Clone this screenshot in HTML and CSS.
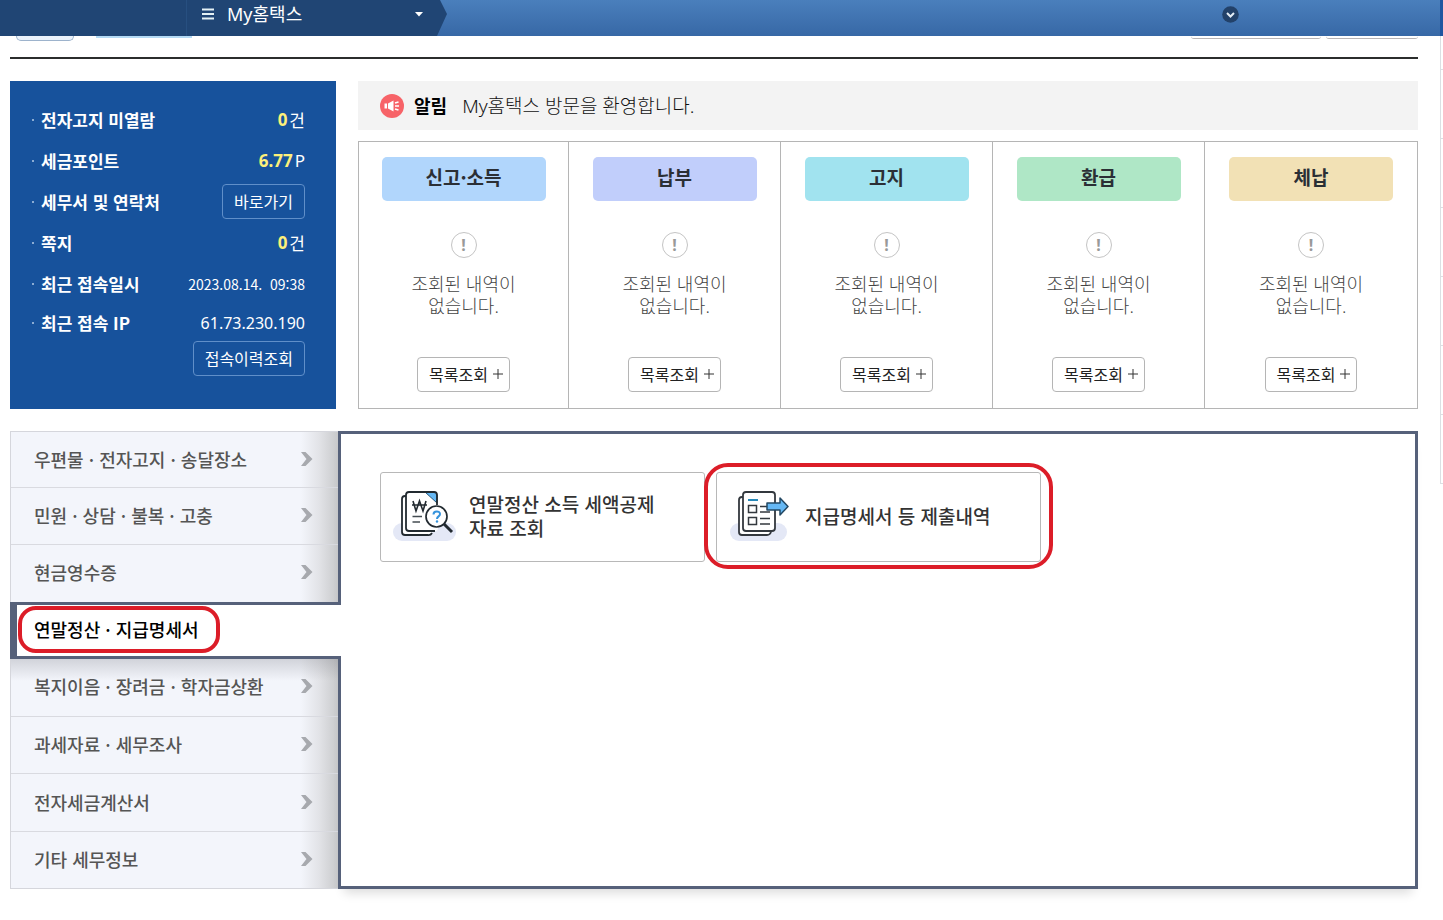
FILE: index.html
```html
<!DOCTYPE html>
<html lang="ko">
<head>
<meta charset="utf-8">
<meta name="viewport" content="width=device-width, initial-scale=1">
<title>My홈택스</title>
<link rel="stylesheet" href="styles.css">
</head>
<body>
<header class="topbar">
  <div class="topbar-menu">
    <button class="menu-button" type="button">
      <svg class="menu-lines" viewBox="0 0 12 12" aria-hidden="true"><path d="M0 1.500h12M0 6h12M0 10.500h12" stroke="#e4f1f5" stroke-width="2"/></svg>
      <span>My홈택스</span>
      <svg class="menu-caret" viewBox="0 0 8 5" aria-hidden="true"><path d="M0 0h8L4 4.600z" fill="#fff"/></svg>
    </button>
  </div>
  <button class="topbar-toggle" type="button" aria-label="펼치기">
    <svg viewBox="0 0 17 17" aria-hidden="true"><circle cx="8.500" cy="8.500" r="8.300" fill="#224169"/><path d="M5 7l3.500 3.500L12 7" fill="none" stroke="#e4edf5" stroke-width="2"/></svg>
  </button>
</header>

<div class="page">
  <div class="tab-strip" aria-hidden="true">
    <span class="strip-pill"></span><span class="strip-active"></span>
    <span class="strip-box strip-box-wide"></span><span class="strip-box"></span>
  </div>

  <main class="content">
    <section class="summary">
      <div class="account">
        <dl class="account-list">
          <div class="account-row"><dt>전자고지 미열람</dt><dd><strong>0</strong>건</dd></div>
          <div class="account-row"><dt>세금포인트</dt><dd><strong>6.77</strong>P</dd></div>
          <div class="account-row"><dt>세무서 및 연락처</dt><dd><button class="outline-button" type="button">바로가기</button></dd></div>
          <div class="account-row"><dt>쪽지</dt><dd><strong>0</strong>건</dd></div>
          <div class="account-row"><dt>최근 접속일시</dt><dd class="date">2023.08.14.&nbsp; 09:38</dd></div>
          <div class="account-row account-row-last"><dt>최근 접속 IP</dt><dd class="address">61.73.230.190</dd></div>
        </dl>
        <button class="outline-button" type="button">접속이력조회</button>
      </div>

      <div class="overview">
        <div class="notice">
          <svg class="notice-icon" viewBox="0 0 24 24" aria-hidden="true"><circle cx="12" cy="12" r="12" fill="#f76368"/><path d="M4.500 9.500H7v5H4.500zM8 9.500l5.500-3v11l-5.500-3z" fill="#fff"/><path d="M15 9l3.500-1M15 12h4M15 15l3.500 1" stroke="#fff" stroke-width="1.600"/></svg>
          <strong>알림</strong>
          <span>My홈택스 방문을 환영합니다.</span>
        </div>
        <div class="status-grid">
          <article class="status"><h2 class="tag tag-report">신고·소득</h2><span class="mark">!</span><p>조회된 내역이<br>없습니다.</p><button class="list-button" type="button">목록조회 <svg viewBox="0 0 10 10" aria-hidden="true"><path d="M5 0v10M0 5h10" stroke="#333"/></svg></button></article>
          <article class="status"><h2 class="tag tag-pay">납부</h2><span class="mark">!</span><p>조회된 내역이<br>없습니다.</p><button class="list-button" type="button">목록조회 <svg viewBox="0 0 10 10" aria-hidden="true"><path d="M5 0v10M0 5h10" stroke="#333"/></svg></button></article>
          <article class="status"><h2 class="tag tag-bill">고지</h2><span class="mark">!</span><p>조회된 내역이<br>없습니다.</p><button class="list-button" type="button">목록조회 <svg viewBox="0 0 10 10" aria-hidden="true"><path d="M5 0v10M0 5h10" stroke="#333"/></svg></button></article>
          <article class="status"><h2 class="tag tag-refund">환급</h2><span class="mark">!</span><p>조회된 내역이<br>없습니다.</p><button class="list-button" type="button">목록조회 <svg viewBox="0 0 10 10" aria-hidden="true"><path d="M5 0v10M0 5h10" stroke="#333"/></svg></button></article>
          <article class="status"><h2 class="tag tag-overdue">체납</h2><span class="mark">!</span><p>조회된 내역이<br>없습니다.</p><button class="list-button" type="button">목록조회 <svg viewBox="0 0 10 10" aria-hidden="true"><path d="M5 0v10M0 5h10" stroke="#333"/></svg></button></article>
        </div>
      </div>
    </section>

    <section class="services">
      <nav class="side">
        <a class="side-item" href="#">우편물 · 전자고지 · 송달장소<svg class="chevron" viewBox="0 0 12 14" aria-hidden="true"><path d="M0 0h4.500l7 7-7 7H0l5.500-7z"/></svg></a>
        <a class="side-item" href="#">민원 · 상담 · 불복 · 고충<svg class="chevron" viewBox="0 0 12 14" aria-hidden="true"><path d="M0 0h4.500l7 7-7 7H0l5.500-7z"/></svg></a>
        <a class="side-item" href="#">현금영수증<svg class="chevron" viewBox="0 0 12 14" aria-hidden="true"><path d="M0 0h4.500l7 7-7 7H0l5.500-7z"/></svg></a>
        <a class="side-item side-item-active" href="#" aria-current="page">연말정산 · 지급명세서<span class="ring ring-side"></span></a>
        <a class="side-item side-item-below" href="#">복지이음 · 장려금 · 학자금상환<svg class="chevron" viewBox="0 0 12 14" aria-hidden="true"><path d="M0 0h4.500l7 7-7 7H0l5.500-7z"/></svg></a>
        <a class="side-item" href="#">과세자료 · 세무조사<svg class="chevron" viewBox="0 0 12 14" aria-hidden="true"><path d="M0 0h4.500l7 7-7 7H0l5.500-7z"/></svg></a>
        <a class="side-item" href="#">전자세금계산서<svg class="chevron" viewBox="0 0 12 14" aria-hidden="true"><path d="M0 0h4.500l7 7-7 7H0l5.500-7z"/></svg></a>
        <a class="side-item" href="#">기타 세무정보<svg class="chevron" viewBox="0 0 12 14" aria-hidden="true"><path d="M0 0h4.500l7 7-7 7H0l5.500-7z"/></svg></a>
      </nav>
      <div class="panel">
        <a class="card" href="#">
          <svg class="card-icon" viewBox="0 0 64 56" aria-hidden="true">
            <rect x="0" y="34" width="63" height="18" rx="9" fill="#e4e8f6"/>
            <path d="M13 7h-1a3 3 0 0 0-3 3v33a3 3 0 0 0 3 3h23a4 4 0 0 0 4-2" fill="#fff" stroke="#222a30" stroke-width="1.800"/>
            <path d="M16 3h21l8 9v27a3 3 0 0 1-3 3H16a3 3 0 0 1-3-3V6a3 3 0 0 1 3-3z" fill="#fff"/>
            <path d="M32 3h9a3 3 0 0 1 3 3v8z" fill="#66b8f4" stroke="#235577"/>
            <path d="M44 16V6a3 3 0 0 0-3-3H16a3 3 0 0 0-3 3v33a3 3 0 0 0 3 3h26" fill="none" stroke="#222a30" stroke-width="1.800"/>
            <path d="M20 12l3 10 3.500-10 3.500 10 3-10M19 16h15" fill="none" stroke="#222a30" stroke-width="1.600"/>
            <path d="M19.500 27.500H29M19.500 33H27" stroke="#444c52" stroke-width="1.500"/>
            <path d="M51 35l8 8" stroke="#222a30" stroke-width="3"/>
            <circle cx="43.500" cy="27.500" r="10.500" fill="#fff" stroke="#222a30" stroke-width="1.700"/>
            <path d="M40.500 25.500c0-4 6.500-4 6.500-.5 0 2.500-3 2.300-3 5" fill="none" stroke="#3593dc" stroke-width="2"/><circle cx="44" cy="32.500" r="1.200" fill="#3593dc"/>
          </svg>
          <span class="card-label">연말정산 소득 세액공제<br>자료 조회</span>
        </a>
        <a class="card" href="#">
          <svg class="card-icon" viewBox="0 0 64 56" aria-hidden="true">
            <rect x="1" y="34" width="57" height="18" rx="9" fill="#e4e8f6"/>
            <path d="M14 8h-1a3 3 0 0 0-3 3v32a3 3 0 0 0 3 3h25a4 4 0 0 0 4-4" fill="#fff" stroke="#33383e" stroke-width="1.800"/>
            <rect x="14" y="3" width="32" height="39" rx="3" fill="#fff" stroke="#33383e" stroke-width="1.800"/>
            <path d="M19 11h10" stroke="#2789b9" stroke-width="2"/>
            <path d="M19.500 16.500h8v7h-8zM19.500 28.500h8v7h-8z" fill="#fff" stroke="#33383e" stroke-width="1.500"/>
            <path d="M31 17.500h11M31 23h10M31 29.500h10M31 35h10" stroke="#33383e" stroke-width="1.400"/>
            <path d="M38 14h13V9l8 8.500-8 8.500v-5H38z" fill="#66b8f4" stroke="#234863" stroke-width="1.500" stroke-linejoin="round"/>
          </svg>
          <span class="card-label">지급명세서 등 제출내역</span>
          <span class="ring ring-card"></span>
        </a>
      </div>
    </section>
  </main>
</div>

<aside class="quick" aria-hidden="true"><span></span><span></span><span></span><span></span><span></span><span></span><span></span></aside>
</body>
</html>
```
FILE: styles.css
```css
* { box-sizing: border-box; }

body {
  margin: 0;
  position: relative;
  background: #fff;
  color: #333;
  font-family: "Noto Sans", "Noto Sans CJK KR", sans-serif;
  font-size: 17px;
}

button { font: inherit; cursor: pointer; }
a { color: inherit; text-decoration: none; }
h2, p, dl, dd { margin: 0; }
svg { display: block; flex: none; }

/* Top bar */
.topbar {
  display: flex;
  height: 36px;
  background: linear-gradient(#4a7fbc, #3768a6);
  border-right: 3px solid #1f56a0;
}
.topbar-menu {
  flex: none;
  width: 447px;
  padding-left: 187px;
  background: linear-gradient(90deg, #204574 186px, #274f80 186px, #274f80 187px, #204574 187px);
  clip-path: polygon(0 0, 440px 0, 100% 14px, 437px 100%, 0 100%);
}
.menu-button {
  display: flex;
  align-items: center;
  width: 100%;
  height: 28px;
  padding: 0 24px 0 15px;
  border: 0;
  background: none;
  color: #fff;
  font-size: 18px;
  line-height: 28px;
  text-align: left;
}
.menu-lines { width: 12px; height: 12px; margin-right: 13px; }
.menu-caret { width: 8px; height: 5px; margin-left: auto; }
.topbar-toggle {
  align-self: flex-start;
  margin: 6px 201px 0 auto;
  padding: 0;
  border: 0;
  background: none;
}
.topbar-toggle svg { width: 17px; height: 17px; }

/* Page frame */
.page { padding: 0 25px 30px 10px; }
.tab-strip {
  display: flex;
  align-items: flex-start;
  height: 23px;
  border-bottom: 2px solid #2b2d2c;
}
.strip-pill {
  width: 58px;
  height: 5px;
  margin-left: 6px;
  border: 1px solid #9db3cc;
  border-top: 0;
  border-radius: 0 0 20px 20px;
  background: #eaf2fb;
}
.strip-active { width: 96px; height: 2px; margin: 0 auto 0 22px; background: #b4daf5; }
.strip-box { width: 92px; height: 3px; border-bottom: 1px solid #b8b4b5; border-radius: 0 0 4px 4px; }
.strip-box-wide { width: 130px; margin-right: 5px; }

.content { display: grid; gap: 22px; padding-top: 22px; }

/* Account summary */
.summary { display: grid; grid-template-columns: 326px 1fr; gap: 22px; }
.account {
  display: flex;
  flex-direction: column;
  align-items: flex-end;
  padding: 18px 31px 33px 22px;
  background: #17529c;
  color: #fff;
}
.account-list { width: 100%; }
.account-row { display: flex; align-items: center; justify-content: space-between; height: 41px; }
.account-row-last { height: 37px; }
.account dt { display: flex; align-items: center; font-family: "Noto Sans CJK KR", sans-serif; font-weight: 700; }
.account dt::before { content: ""; width: 2px; height: 2px; margin-right: 7px; background: #8bacd3; }
.account dd { display: flex; align-items: center; gap: 2px; }
.account dd strong { color: #fdf07a; }
.account .address { font-size: 16px; }
.account .date { font-family: "Noto Sans CJK KR", sans-serif; font-size: 14px; }
.outline-button {
  height: 35px;
  padding: 0 11px;
  border: 1px solid #608fc9;
  border-radius: 4px;
  background: none;
  color: #fff;
  font-size: 16px;
  line-height: 24px;
}

/* Notice and status columns */
.overview { display: flex; flex-direction: column; gap: 11px; min-width: 0; }
.notice {
  display: flex;
  align-items: center;
  height: 49px;
  padding-left: 22px;
  background: #f3f3f3;
  color: #111;
}
.notice-icon { width: 24px; height: 24px; margin-right: 10px; }
.notice strong { margin-right: 15px; padding-bottom: 2px; color: #000; font-size: 18px; }
.notice span { padding-bottom: 2px; font-size: 19px; font-weight: 300; }
.status-grid {
  display: grid;
  grid-template-columns: 209fr 212fr 212fr 212fr 213fr;
  flex: 1;
  border: 1px solid #b5b5b5;
}
.status {
  display: flex;
  flex-direction: column;
  align-items: center;
  padding: 15px 12px 16px;
}
.status + .status { border-left: 1px solid #b5b5b5; }
.tag {
  width: 164px;
  max-width: 100%;
  height: 44px;
  border-radius: 5px;
  color: #2b2f35;
  font-family: "Noto Sans CJK KR", sans-serif;
  font-size: 19px;
  font-weight: 700;
  line-height: 40px;
  text-align: center;
}
.tag-report { background: #b1d6fc; }
.tag-pay { background: #c1cefb; }
.tag-bill { background: #a1e3ef; }
.tag-refund { background: #afe7c6; }
.tag-overdue { background: #f2e1b5; }
.mark {
  width: 26px;
  height: 26px;
  margin-top: 31px;
  border: 1px solid #c4c4c4;
  border-radius: 50%;
  color: #999;
  font-size: 16px;
  font-weight: 700;
  line-height: 24px;
  text-align: center;
}
.status p {
  margin-top: 15px;
  color: #444;
  font-size: 18px;
  font-weight: 300;
  line-height: 22px;
  text-align: center;
}
.list-button {
  display: flex;
  align-items: center;
  gap: 5px;
  height: 35px;
  margin-top: auto;
  padding: 0 6px 2px 11px;
  border: 1px solid #b5b5b5;
  border-radius: 4px;
  background: #fff;
  color: #222;
  font-size: 16px;
}
.list-button svg { width: 10px; height: 10px; }

/* Service menu */
.services { display: grid; grid-template-columns: 328px 1fr; min-height: 458px; }
.side {
  display: grid;
  grid-template-rows: 55px repeat(7, 1fr);
  border: 1px solid #d5d6dc;
  border-right: 0;
  background: linear-gradient(90deg, #f3f5fb 290px, #e2e3e7 308px, #c8c9cb 100%);
  color: #555;
  font-family: "Noto Sans CJK KR", sans-serif;
  font-size: 18px;
  font-weight: 500;
}
.side-item {
  display: flex;
  align-items: center;
  justify-content: space-between;
  padding: 0 25px 2px 23px;
  line-height: 28px;
}
.side-item + .side-item { border-top: 1px solid #d9dae0; }
.chevron { width: 12px; height: 14px; fill: #a7a9ae; }
.side .side-item-active {
  position: relative;
  z-index: 1;
  margin: 0 -3px 0 -1px;
  padding: 0 0 2px 17px;
  border: 3px solid #56617a;
  border-right: 0;
  border-left-width: 7px;
  background: #fff;
  color: #000;
}
.side .side-item-below {
  border-top: 0;
  background: linear-gradient(rgba(90, 92, 100, .22), rgba(90, 92, 100, 0) 22px);
}
.panel {
  display: flex;
  flex-wrap: wrap;
  align-content: flex-start;
  gap: 11px;
  padding: 38px 39px;
  border: 3px solid #56617a;
  background: #fff;
  box-shadow: 0 10px 10px -6px rgba(0, 0, 0, .14);
}
.card {
  position: relative;
  display: flex;
  align-items: center;
  gap: 12px;
  width: 325px;
  height: 90px;
  padding-left: 12px;
  border: 1px solid #b8b8b8;
  border-radius: 3px;
  font-family: "Noto Sans CJK KR", sans-serif;
  font-size: 19px;
  font-weight: 500;
  line-height: 24px;
}
.card-icon { width: 64px; height: 56px; }
.card-label { padding-bottom: 3px; }

/* Red highlight rings */
.ring { position: absolute; border: 4px solid #dc1d28; pointer-events: none; }
.ring-side { top: 1px; left: 1px; width: 202px; height: 47px; border-radius: 18px; }
.ring-card { inset: -10px -13px -8px -13px; border-radius: 24px; }

/* Docked quick menu at the window edge */
.quick {
  position: absolute;
  top: 0;
  right: 0;
  width: 3px;
  margin-top: 36px;
  border-left: 1px solid #dcdfe3;
}
.quick span { display: block; height: 69px; border-bottom: 1px solid #dcdfe3; }
.quick span:first-child { height: 34px; }
```
